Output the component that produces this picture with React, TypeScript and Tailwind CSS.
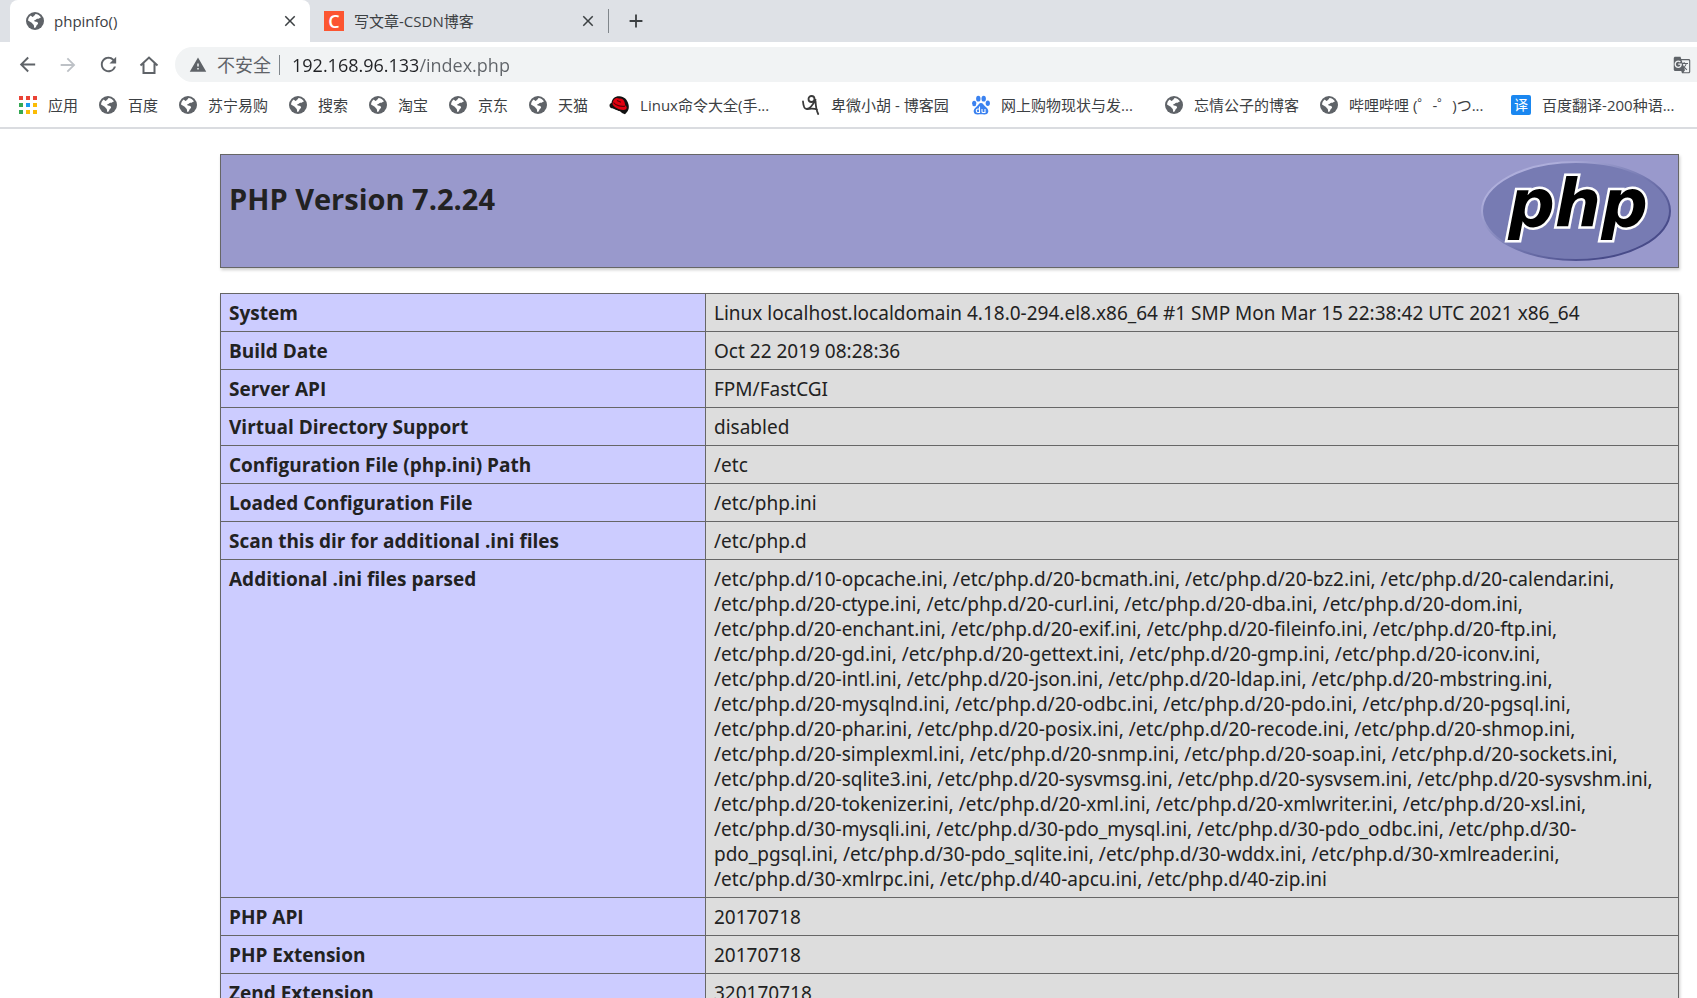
import type { ReactNode } from "react";
import { MdArrowBack, MdArrowForward, MdRefresh, MdWarning, MdGTranslate, MdClose, MdAdd } from "react-icons/md";

const info: { label: string; value: string[] }[] = [
  { label: "System", value: ["Linux localhost.localdomain 4.18.0-294.el8.x86_64 #1 SMP Mon Mar 15 22:38:42 UTC 2021 x86_64"] },
  { label: "Build Date", value: ["Oct 22 2019 08:28:36"] },
  { label: "Server API", value: ["FPM/FastCGI"] },
  { label: "Virtual Directory Support", value: ["disabled"] },
  { label: "Configuration File (php.ini) Path", value: ["/etc"] },
  { label: "Loaded Configuration File", value: ["/etc/php.ini"] },
  { label: "Scan this dir for additional .ini files", value: ["/etc/php.d"] },
  {
    label: "Additional .ini files parsed",
    value: [
      "/etc/php.d/10-opcache.ini, /etc/php.d/20-bcmath.ini, /etc/php.d/20-bz2.ini, /etc/php.d/20-calendar.ini,",
      "/etc/php.d/20-ctype.ini, /etc/php.d/20-curl.ini, /etc/php.d/20-dba.ini, /etc/php.d/20-dom.ini,",
      "/etc/php.d/20-enchant.ini, /etc/php.d/20-exif.ini, /etc/php.d/20-fileinfo.ini, /etc/php.d/20-ftp.ini,",
      "/etc/php.d/20-gd.ini, /etc/php.d/20-gettext.ini, /etc/php.d/20-gmp.ini, /etc/php.d/20-iconv.ini,",
      "/etc/php.d/20-intl.ini, /etc/php.d/20-json.ini, /etc/php.d/20-ldap.ini, /etc/php.d/20-mbstring.ini,",
      "/etc/php.d/20-mysqlnd.ini, /etc/php.d/20-odbc.ini, /etc/php.d/20-pdo.ini, /etc/php.d/20-pgsql.ini,",
      "/etc/php.d/20-phar.ini, /etc/php.d/20-posix.ini, /etc/php.d/20-recode.ini, /etc/php.d/20-shmop.ini,",
      "/etc/php.d/20-simplexml.ini, /etc/php.d/20-snmp.ini, /etc/php.d/20-soap.ini, /etc/php.d/20-sockets.ini,",
      "/etc/php.d/20-sqlite3.ini, /etc/php.d/20-sysvmsg.ini, /etc/php.d/20-sysvsem.ini, /etc/php.d/20-sysvshm.ini,",
      "/etc/php.d/20-tokenizer.ini, /etc/php.d/20-xml.ini, /etc/php.d/20-xmlwriter.ini, /etc/php.d/20-xsl.ini,",
      "/etc/php.d/30-mysqli.ini, /etc/php.d/30-pdo_mysql.ini, /etc/php.d/30-pdo_odbc.ini, /etc/php.d/30-",
      "pdo_pgsql.ini, /etc/php.d/30-pdo_sqlite.ini, /etc/php.d/30-wddx.ini, /etc/php.d/30-xmlreader.ini,",
      "/etc/php.d/30-xmlrpc.ini, /etc/php.d/40-apcu.ini, /etc/php.d/40-zip.ini",
    ],
  },
  { label: "PHP API", value: ["20170718"] },
  { label: "PHP Extension", value: ["20170718"] },
  { label: "Zend Extension", value: ["320170718"] },
];

function Globe() {
  return (
    <svg viewBox="0 0 18 18" className="size-[18px] shrink-0">
      <circle cx="9" cy="9" r="9" fill="#5f6368" />
      <path d="M9.500 2c2 .2 4.500 1.500 5.500 3.500-1.500.2-2 1.500-3.500 1.300-1.200-.2-1.200 1-2.300 1.200-1.200.2-1.400 1.200-.4 1.400 1.700.2 3.500.6 3.300 2.200-.2 1.300-1.700 1.400-1.900 2.700-.1 1-1 1.700-2 1.700l-.3-2.500c-.2-1.200-1.600-1.200-1.800-2.500L2 8.500c.2-2 1.200-3.800 2.700-4.900L6.500 5c1.200-.2.900-1.300 2-1.500z" fill="#fff" />
    </svg>
  );
}

function HomeIcon() {
  return (
    <svg viewBox="0 0 22 22" className="size-[22px]" fill="none" stroke="currentColor" strokeWidth="2">
      <path d="M2.500 11.500 11 3.500l8.500 8M5.500 9.500V19h11V9.500" />
    </svg>
  );
}

function AppsGrid() {
  const colors = ["#ea4335", "#ea4335", "#ea4335", "#34a853", "#1a9bf0", "#fbbc05", "#34a853", "#fbbc05", "#fbbc05"];
  return (
    <svg viewBox="0 0 18 18" className="size-[18px] shrink-0">
      {colors.map((c, i) => (
        <rect key={i} x={(i % 3) * 7} y={Math.floor(i / 3) * 7} width="4" height="4" fill={c} />
      ))}
    </svg>
  );
}

function RedHat() {
  return (
    <svg viewBox="0 0 20 20" className="size-5 shrink-0">
      <path d="M2 13C-.5 11 .5 8.500 2.500 8 3 3.500 6 1 10.500 1.200c4.500.2 8 3.300 9 8.300.8 3.500 0 6-1.500 7.500l-2 2.200-2.500-1-5-2.700z" fill="#111" />
      <path d="M3.500 8.500C4 5 6 2.700 8 3l2 .6c2.500-.8 5 .8 5.500 3.400l.8 3.500c1.500 1 2 2.500.7 3.700-1.700 1.300-6 .7-9-.9-2.700-1.400-4.700-3.300-4.500-4.800z" fill="#e0000f" />
      <path d="M4.500 7.500c2 2.600 7 4.500 11.500 3.600M8 5.500l4 1.800" fill="none" stroke="#5c0008" strokeWidth="1.200" />
      <path d="M3 13.500c2-.2 3 1.800 5.500 2.200 1.800.3 3.500.6 4 2.100l-1 1.700H6L3.500 17z" fill="#fff" />
    </svg>
  );
}

function CnBlogs() {
  return (
    <svg viewBox="0 0 18 20" className="h-5 w-[18px] shrink-0" fill="none" stroke="#3a3a3a" strokeWidth="1.800" strokeLinecap="round">
      <circle cx="9.500" cy="4" r="3" />
      <path d="M1 6.500c.3 4 1.300 7.500 3.700 7.500 3.500-.2 6-3.500 8.800-9.300M13.500 6c.2 4.500.7 9 2.700 13M5.500 14c3-.4 7-.5 9.500.5" />
    </svg>
  );
}

function BaiduPaw() {
  return (
    <svg viewBox="0 0 18 20" className="h-5 w-[18px] shrink-0" fill="#3b82f0">
      <ellipse cx="2.200" cy="8.500" rx="2.100" ry="2.700" />
      <ellipse cx="6.300" cy="3.700" rx="2.200" ry="2.900" />
      <ellipse cx="11.700" cy="3.700" rx="2.200" ry="2.900" />
      <ellipse cx="15.800" cy="8.300" rx="2.100" ry="2.700" />
      <path d="M9 8c2 0 2.700 2 4 3.300 2 1.900 3.700 3.200 3.300 5.500-.4 2.300-2.500 2.900-4.300 2.700-2-.2-4-.2-6 0-1.900.2-3.900-.4-4.300-2.700-.4-2.300 1.500-3.600 3.300-5.500C6.300 10 7 8 9 8z" />
      <path d="M7.500 11.500v6H6c-2.300 0-2.300-3.500 0-3.500h1.500M10 14v2.500c0 .7.500 1 1 1h2V14" fill="none" stroke="#fff" strokeWidth="1.100" />
    </svg>
  );
}

function PhpLogo() {
  return (
    <svg viewBox="0 0 190 100" className="h-[100px] w-[190px] shrink-0" role="img" aria-label="PHP logo">
      <defs>
        <linearGradient id="rim" x1="0" y1="0" x2="1" y2="1">
          <stop offset="0.200" stopColor="#aeaedb" />
          <stop offset="0.500" stopColor="#777bb3" />
          <stop offset="0.800" stopColor="#484b89" />
        </linearGradient>
      </defs>
      <ellipse cx="95" cy="50" rx="94" ry="49" fill="#777bb3" stroke="url(#rim)" strokeWidth="2" />
      <text x="97" y="65" textAnchor="middle" fontFamily="DejaVu Sans" fontWeight="700" fontStyle="italic" fontSize="65" fill="#000" stroke="#fff" strokeWidth="5" paintOrder="stroke">
        php
      </text>
    </svg>
  );
}

const bookmarks: { text: string; icon: ReactNode; width?: string }[] = [
  { text: "应用", icon: <AppsGrid /> },
  { text: "百度", icon: <Globe /> },
  { text: "苏宁易购", icon: <Globe /> },
  { text: "搜索", icon: <Globe /> },
  { text: "淘宝", icon: <Globe /> },
  { text: "京东", icon: <Globe /> },
  { text: "天猫", icon: <Globe /> },
  { text: "Linux命令大全(手...", icon: <RedHat />, width: "w-[172px]" },
  { text: "卑微小胡 - 博客园", icon: <CnBlogs />, width: "w-[149px]" },
  { text: "网上购物现状与发...", icon: <BaiduPaw />, width: "w-[172px]" },
  { text: "忘情公子的博客", icon: <Globe />, width: "w-[134px]" },
  { text: "哔哩哔哩 (゜-゜)つ...", icon: <Globe />, width: "w-[170px]" },
  { text: "百度翻译-200种语...", icon: <span className="flex size-5 items-center justify-center rounded-xs bg-[#1a87f0] text-sm text-white">译</span> },
];

export default function App() {
  return (
    <div className="h-screen overflow-hidden bg-white font-['Open_Sans','Noto_Sans_CJK_SC',sans-serif] text-[#222]">
      {/* TABS */}
      <div className="flex h-[42px] bg-[#dee1e6] pl-[10px] text-[15px] text-[#3c4043]">
        <div className="flex w-[300px] items-center gap-[10px] rounded-t-lg bg-white pr-[11px] pl-4">
          <Globe />
          <span className="flex-1">phpinfo()</span>
          <button aria-label="Close tab">
            <MdClose className="size-[18px]" />
          </button>
        </div>
        <div className="flex w-[298px] items-center gap-[10px] pr-[11px] pl-[14px]">
          <span className="flex size-5 items-center justify-center bg-[#fc5531] text-lg font-semibold text-white">C</span>
          <span className="flex-1">写文章-CSDN博客</span>
          <button aria-label="Close tab">
            <MdClose className="size-[18px]" />
          </button>
        </div>
        <div className="my-auto h-6 w-px bg-[#80868b]" />
        <button aria-label="New tab" className="ml-4">
          <MdAdd className="size-[22px]" />
        </button>
      </div>

      {/* TOOLBAR */}
      <div className="flex h-[45px] items-center pl-4 text-[#5f6368]">
        <div className="flex w-[159px] shrink-0 gap-[18px]">
          <button aria-label="Back"><MdArrowBack className="size-[23px]" /></button>
          <button aria-label="Forward" className="text-[#bdc1c6]"><MdArrowForward className="size-[22px]" /></button>
          <button aria-label="Reload"><MdRefresh className="size-[23px]" /></button>
          <button aria-label="Home"><HomeIcon /></button>
        </div>
        <div className="flex h-[35px] flex-1 items-center rounded-l-full bg-[#f1f3f4] pr-[6px] pl-[14px]">
          <MdWarning className="size-[18px]" />
          <span className="ml-[10px] text-lg">不安全</span>
          <span className="mr-3 ml-2 h-5 w-px bg-[#80868b]" />
          <input
            aria-label="Address"
            defaultValue="192.168.96.133/index.php"
            className="flex-1 bg-[linear-gradient(90deg,#202124_126px,#5f6368_126px)] bg-clip-text text-lg text-transparent outline-none"
          />
          <button aria-label="Translate"><MdGTranslate className="size-[18px]" /></button>
        </div>
      </div>

      {/* BOOKMARKS */}
      <div className="flex h-[42px] items-center gap-[21px] border-b-2 border-[#dadce0] pb-1 pl-[19px] text-[15px] whitespace-nowrap text-[#3c4043]">
        {bookmarks.map((b) => (
          <a key={b.text} href="#" className={`flex shrink-0 items-center gap-[11px] ${b.width ?? ""}`}>
            {b.icon}
            {b.text}
          </a>
        ))}
      </div>

      {/* PHPINFO */}
      <main className="flex flex-col gap-[25px] pt-[25px] pr-[18px] pl-[220px]">
        <div className="flex h-[114px] justify-between border border-[#666] bg-[#9999cc] py-[6px] pr-[7px] pl-2 shadow-[1px_2px_3px_#ccc]">
          <h1 className="mt-4 text-[29px] leading-[44px] font-bold">PHP Version 7.2.24</h1>
          <PhpLogo />
        </div>
        <table className="w-full table-fixed border-collapse text-[19px] leading-[25px] shadow-[1px_2px_3px_#ccc]">
          <tbody>
            {info.map((row) => (
              <tr key={row.label}>
                <th scope="row" className="w-[485px] border border-[#666] bg-[#ccccff] px-2 pt-[7px] pb-[5px] text-left align-top font-bold">
                  {row.label}
                </th>
                <td className="border border-[#666] bg-[#ddd] px-2 pt-[7px] pb-[5px] align-top font-['Noto_Sans',sans-serif] whitespace-pre-line">
                  {row.value.join("\n")}
                </td>
              </tr>
            ))}
          </tbody>
        </table>
      </main>
    </div>
  );
}
